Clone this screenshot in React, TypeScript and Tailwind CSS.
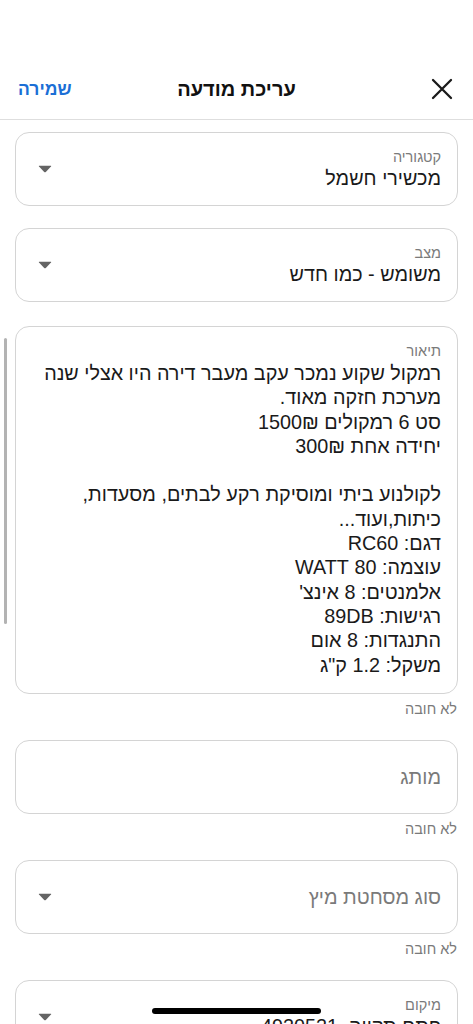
import React from "react";

const FONT = { fontFamily: '"Liberation Sans", Arial, "DejaVu Sans", sans-serif' };

function Caret() {
  return (
    <svg width="14" height="8" viewBox="0 0 14 8" className="shrink-0">
      <path d="M1.2 0.8 H12.8 Q13.6 0.8 13 1.5 L7.8 6.9 Q7 7.6 6.2 6.9 L1 1.5 Q0.4 0.8 1.2 0.8 Z" fill="#646464" />
    </svg>
  );
}

function SelectBox({ label, value, placeholder }: { label?: string; value?: string; placeholder?: string }) {
  return (
    <div className="mx-[15px] h-[74px] rounded-[14px] border border-[#d4d4d4] flex items-center justify-between pr-[16px] pl-[22px]">
      <div className="flex flex-col">
        {label && <div className="text-[14.5px] leading-[18px] text-[#7a7a7a]">{label}</div>}
        {value && <div className="text-[19.8px] leading-[25px] text-[#1a1a1a] whitespace-nowrap">{value}</div>}
        {placeholder && <div className="text-[19.8px] leading-[25px] text-[#7a7a7a]">{placeholder}</div>}
      </div>
      <Caret />
    </div>
  );
}

function Optional() {
  return <div className="mx-[16px] mt-[6px] text-[14.5px] leading-[18px] text-[#7a7a7a]">לא חובה</div>;
}

const desc = [
  "רמקול שקוע נמכר עקב מעבר דירה היו אצלי שנה",
  "מערכת חזקה מאוד.",
  "סט 6 רמקולים 1500₪",
  "יחידה אחת 300₪",
  "",
  "לקולנוע ביתי ומוסיקת רקע לבתים, מסעדות,",
  "כיתות,ועוד...",
  "דגם: RC60",
  "עוצמה: 80 WATT",
  "אלמנטים: 8 אינצ'",
  "רגישות: 89DB",
  "התנגדות: 8 אום",
  'משקל: 1.2 ק"ג',
];

export default function App() {
  return (
    <div dir="rtl" style={FONT} className="relative w-[473px] h-[1024px] overflow-hidden bg-white">
      <div className="h-[60px]" />
      {/* header */}
      <div className="h-[60px] border-b border-[#dedede] grid grid-cols-[1fr_auto_1fr] items-center px-[18px] pb-[1px]">
        <div className="flex justify-start">
          <svg width="22" height="22" viewBox="0 0 22 22" className="mr-[2px]">
            <path d="M2 2 L20 20 M20 2 L2 20" stroke="#1a1a1a" strokeWidth="2.3" strokeLinecap="round" />
          </svg>
        </div>
        <div className="text-[20px] font-bold text-[#111]">עריכת מודעה</div>
        <div className="flex justify-end">
          <div className="text-[17.5px] font-bold text-[#1b6fd6]">שמירה</div>
        </div>
      </div>

      <div className="pt-[12px]">
        <SelectBox label="קטגוריה" value="מכשירי חשמל" />
        <div className="h-[22px]" />
        <SelectBox label="מצב" value="משומש - כמו חדש" />
        <div className="h-[24px]" />
        <div className="mx-[15px] h-[368px] rounded-[14px] border border-[#d4d4d4] pr-[16px] pl-[16px] pt-[15px]">
          <div className="text-[14.5px] leading-[18px] text-[#7a7a7a]">תיאור</div>
          <div className="text-[19.8px] leading-[24.3px] text-[#1a1a1a] mt-[1px]">
            {desc.map((l, i) => (
              <div key={i} className="whitespace-nowrap h-[24.3px]">{l}</div>
            ))}
          </div>
        </div>
        <Optional />
        <div className="h-[22px]" />
        <div className="mx-[15px] h-[74px] rounded-[14px] border border-[#d4d4d4] flex items-center pr-[16px]">
          <div className="text-[19.8px] leading-[25px] text-[#7a7a7a]">מותג</div>
        </div>
        <Optional />
        <div className="h-[22px]" />
        <SelectBox placeholder="סוג מסחטת מיץ" />
        <Optional />
        <div className="h-[22px]" />
        <SelectBox label="מיקום" value="פתח תקווה, 4920521" />
      </div>

      {/* scrollbar */}
      <div className="absolute left-[4px] top-[338px] w-[3px] h-[286px] rounded-full bg-[#b3b3b3]" />
      {/* home indicator */}
      <div className="absolute left-[152px] top-[1008px] w-[169px] h-[6px] rounded-full bg-black" />
    </div>
  );
}
